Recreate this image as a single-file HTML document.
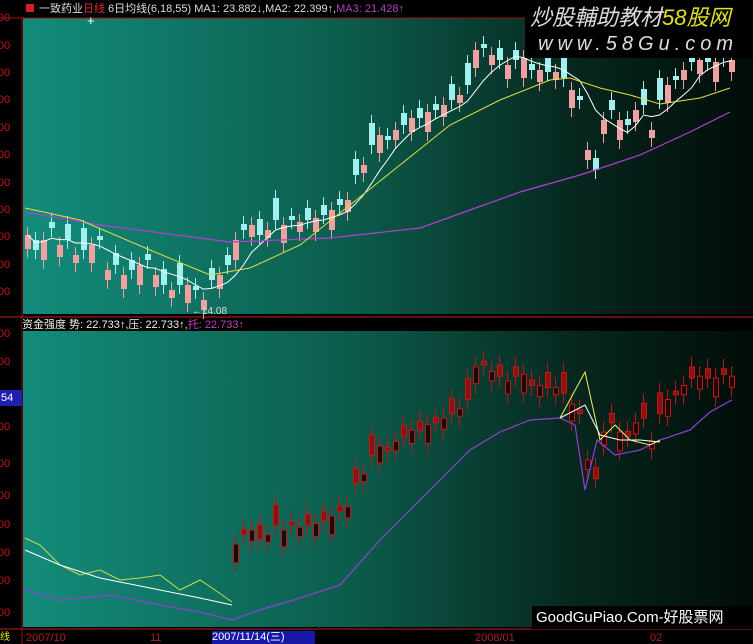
<!DOCTYPE html>
<html><head><meta charset="utf-8"><style>
body{margin:0;width:753px;height:644px;background:#000;overflow:hidden;position:relative;font-family:"Liberation Sans","Noto Sans CJK SC",sans-serif}
.t{position:absolute;font-size:11px;white-space:nowrap;line-height:12px}
</style></head><body>
<svg id="s" width="753" height="644" style="position:absolute;left:0;top:0">
<defs><linearGradient id="g" x1="0" x2="1" y1="0" y2="0">
<stop offset="0" stop-color="#138c7b"/><stop offset="0.45" stop-color="#0c5c4c"/><stop offset="0.75" stop-color="#06281f"/><stop offset="1" stop-color="#020c08"/></linearGradient></defs>
<rect x="23" y="18" width="730" height="296" fill="url(#g)"/>
<rect x="23" y="331" width="730" height="296" fill="url(#g)"/>
<line x1="22" y1="0" x2="22" y2="644" stroke="#a01010"/>
<line x1="0" y1="18" x2="753" y2="18" stroke="#a01010"/>
<line x1="0" y1="317" x2="753" y2="317" stroke="#c02020"/>
<line x1="0" y1="629" x2="753" y2="629" stroke="#c02020"/>
<rect x="0" y="390" width="22" height="16" fill="#2020b0"/>
<g id="c"></g>
<polyline fill="none" stroke="#b040d0" stroke-width="1.2" points="25,212 100,225 230,242 330,238 420,228 470,210 520,192 580,175 640,155 690,132 730,112"/>
<polyline fill="none" stroke="#e0e040" stroke-width="1" points="25,208 80,220 150,250 210,275 250,268 300,245 350,205 400,165 450,125 500,100 550,80 570,78 600,88 630,95 660,104 700,98 730,88"/>
<polyline fill="none" stroke="#9040d0" stroke-width="1.2" points="25,590 60,600 110,595 160,605 200,612 232,620 260,610 300,598 340,585 380,540 410,510 440,480 470,450 500,432 530,420 560,418 575,425 585,490 597,440 615,455 640,450 660,440 690,430 710,412 732,400"/>
<polyline fill="none" stroke="#c8e040" stroke-width="1" points="25,538 40,545 60,565 80,575 100,570 120,580 140,578 160,575 180,590 200,580 215,590 232,602"/>
<polyline fill="none" stroke="#ffffff" stroke-width="1" points="25,550 60,565 100,578 150,588 200,598 232,605"/>
<polyline fill="none" stroke="#f0f060" stroke-width="1" points="560,418 585,372 600,440 615,425 630,440 650,445 660,440"/>
<polyline fill="none" stroke="#ffffff" stroke-width="1" points="560,418 585,405 600,435 620,440 640,440 660,442"/>
<text x="87" y="25" fill="#fff" font-size="13">+</text>
</svg>
<div class="t" style="left:0;top:0;width:753px;height:17px;background:#000"></div>
<div class="t" style="left:26px;top:4px;width:8px;height:8px;background:#d02020"></div>
<div class="t" style="left:39px;top:3px;color:#ddd">一致药业<span style="color:#e03030">日线</span> 6日均线(6,18,55) MA1: 23.882↓,MA2: 22.399↑,<span style="color:#b040c0">MA3: 21.428↑</span></div>
<div class="t" style="left:22px;top:319px;color:#eee;background:#000;width:731px">资金强度 势: 22.733↑,压: 22.733↑,<span style="color:#c040c0">托: 22.733↑</span></div>
<div class="t" style="left:192px;top:306px;color:#ddd;font-size:10px">←14.08</div>
<div style="position:absolute;left:525px;top:0;width:228px;height:58px;background:#000"></div>
<div class="t" style="left:530px;top:6px;font-size:22px;line-height:24px;color:#ddd;font-style:italic">炒股輔助教材<span style="color:#e0e020">58股网</span></div>
<div class="t" style="left:538px;top:33px;font-size:20px;line-height:22px;color:#ddd;font-style:italic;letter-spacing:5px">www.58Gu.com</div>
<div style="position:absolute;left:532px;top:606px;width:221px;height:23px;background:#000"></div>
<div class="t" style="left:536px;top:610px;font-size:15px;line-height:16px;color:#fff">GoodGuPiao.Com-好股票网</div>
<div id="ax"></div>
<div class="t" style="left:0;top:632px;color:#ee0;font-size:10px">线</div>
<div class="t" style="left:26px;top:632px;color:#b02020">2007/10</div>
<div class="t" style="left:150px;top:632px;color:#b02020">11</div>
<div class="t" style="left:212px;top:631px;width:103px;height:13px;background:#1818a8;color:#fff">2007/11/14(三)</div>
<div class="t" style="left:475px;top:632px;color:#b02020">2008/01</div>
<div class="t" style="left:650px;top:632px;color:#b02020">02</div>
<div class="t" style="left:1px;top:392px;color:#fff">54</div>
<script>
(function(){
var ax=document.getElementById('ax'),h='';
[12,40,67,94,122,149,177,204,231,259,286,328,356,421,458,490,519,547,575,607].forEach(function(y){h+='<div class="t" style="left:-2px;top:'+y+'px;color:#c01818">00</div>'});
ax.innerHTML=h;
var cl=[235,250,240,228,245,240,255,250,245,240,270,265,275,270,265,260,275,285,290,285,285,290,300,280,275,265,240,230,225,235,230,220,225,220,222,220,218,215,210,205,200,175,165,145,135,140,130,125,118,118,112,110,105,100,95,85,50,48,55,60,65,60,58,70,70,72,72,78,90,100,150,170,120,110,120,125,110,105,130,100,85,80,70,62,60,62,62,58,60];
var off=[14,-10,20,-6,12,-16,8,-22,18,-4,10,-12];
var s='',ma=[];
for(var i=0;i<cl.length;i++){
 var x=25+i*8,c=cl[i],o=c+off[i%off.length];
 var tp=Math.min(o,c),hh=Math.max(Math.abs(o-c),2),up=c<o;
 var col=up?'#f0a0a0':'#a0f0f0';
 s+='<line x1="'+(x+2.5)+'" x2="'+(x+2.5)+'" y1="'+(tp-8)+'" y2="'+(tp+hh+9)+'" stroke="'+col+'"/>';
 s+='<rect x="'+x+'" y="'+tp+'" width="6" height="'+hh+'" fill="'+col+'"/>';
 if(x>=232){var a=365+(o-48)*235/252,b=365+(c-48)*235/252,t2=Math.min(a,b),h2=Math.max(Math.abs(a-b),3);
  s+='<line x1="'+(x+2.5)+'" x2="'+(x+2.5)+'" y1="'+(t2-10)+'" y2="'+(t2+h2+10)+'" stroke="#b01818"/>';
  s+='<rect x="'+(x+0.5)+'" y="'+t2+'" width="5" height="'+h2+'" fill="'+(up?'#200808':'#901010')+'" stroke="#c01818"/>';}
 var k=Math.max(0,i-5),sum=0;for(var j=k;j<=i;j++)sum+=cl[j];ma.push((x+2.5)+','+(sum/(i-k+1)));
 }
s+='<polyline fill="none" stroke="#fff" stroke-width="1" points="'+ma.join(' ')+'"/>';
document.getElementById('c').innerHTML=s;
})();
</script>
</body></html>
